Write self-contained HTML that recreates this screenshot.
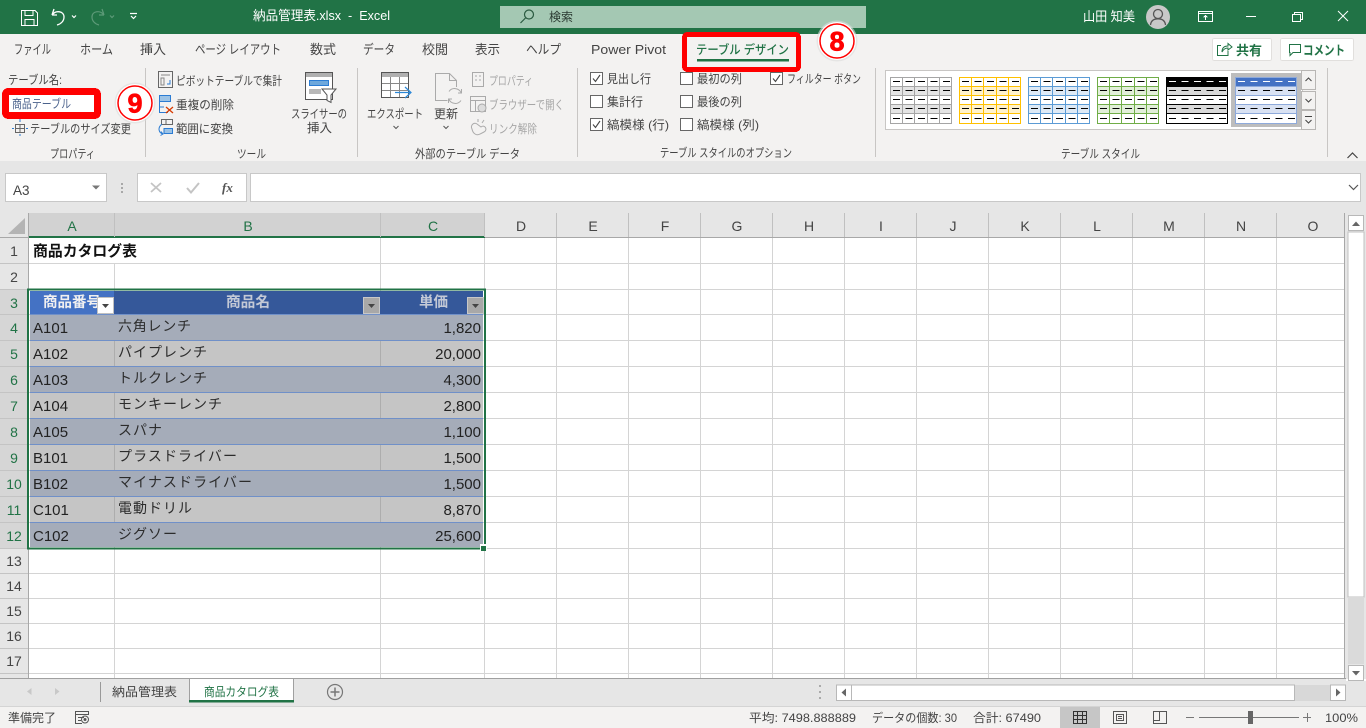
<!DOCTYPE html>
<html lang="ja"><head><meta charset="utf-8"><title>納品管理表.xlsx - Excel</title>
<style>
html,body{margin:0;padding:0;background:#fff;overflow:hidden;width:1366px;height:728px}
svg{display:block}
text{font-family:"Liberation Sans","Noto Sans CJK JP",sans-serif;font-size:12px;fill:#444;white-space:pre}
.w{fill:#fff}.g{fill:#a6a6a6}.gr{fill:#217346}.d{fill:#222}.c{font-size:15px;fill:#222}.k{font-size:14px;fill:#2c2c2c}.h{font-size:14px;fill:#444}.hg{font-size:14px;fill:#217346}
.s{fill:none;stroke:#555;stroke-width:1}.sl{fill:none;stroke:#aaa;stroke-width:1}
.grid{stroke:#d4d4d4;stroke-width:1}
</style></head><body>
<svg width="1366" height="728" viewBox="0 0 1366 728" xmlns="http://www.w3.org/2000/svg" shape-rendering="crispEdges">
<defs>
<symbol id="th" viewBox="0 0 62 47" width="62" height="47">
<rect x="0" y="0" width="62" height="47" fill="#fff"/>
<rect x="0" y="10" width="62" height="9" style="fill:var(--b)"/>
<rect x="0" y="28" width="62" height="9" style="fill:var(--b)"/>
<path d="M.5 .5H61.5V46.5H.5ZM0 9.5H62M0 18.5H62M0 27.5H62M0 36.5H62M12.5 0V47M24.500 0V47M37.5 0V47M49.500 0V47" fill="none" style="stroke:var(--l)"/>
<path d="M3 4.500H62M3 13.500H62M3 22.500H62M3 31.500H62M3 41.500H62" fill="none" stroke="#000" stroke-dasharray="7 5.500"/>
</symbol>
<symbol id="tn" viewBox="0 0 62 47" width="62" height="47">
<rect x="0" y="0" width="62" height="47" fill="#fff"/>
<rect x="0" y="0" width="62" height="9" style="fill:var(--h)"/>
<rect x="0" y="10" width="62" height="9" style="fill:var(--b)"/>
<rect x="0" y="28" width="62" height="9" style="fill:var(--b)"/>
<path d="M.5 .5H61.500V46.500H.5ZM0 9.500H62M0 18.500H62M0 27.500H62M0 36.500H62" fill="none" style="stroke:var(--l)"/>
<path d="M3 4.500H62" fill="none" stroke="#fff" stroke-dasharray="7 5.500"/>
<path d="M3 13.500H62M3 22.500H62M3 31.500H62M3 41.500H62" fill="none" stroke="#000" stroke-dasharray="7 5.500"/>
</symbol>
</defs>

<!-- backgrounds -->
<rect width="1366" height="728" fill="#fff"/>
<rect width="1366" height="34" fill="#217346"/>
<rect y="34" width="1366" height="128" fill="#f3f2f1"/>
<rect y="161" width="1366" height="52" fill="#e6e6e6"/>

<!-- title bar -->
<g fill="none" stroke="#fff" stroke-width="1.200">
<path d="M21.500 10.500H35L37.500 13V25.500H21.500Z"/><path d="M25 10.500V15.500H33V10.500M25 25.500V19.500H34V25.500"/>
<path d="M52 15L54 9M52 15H57M52.500 14.500C56 10 64 11 64 17C64 21 61 24 57 25" shape-rendering="auto" stroke-width="1.300"/>
<path d="M72 15.500L74 17.500L76 15.500" shape-rendering="auto"/>
<g stroke="#5d9a78"><path d="M104 15L102 9M104 15H99M103.500 14.500C100 10 92 11 92 17C92 21 95 24 99 25" shape-rendering="auto"/><path d="M110 15.500L112 17.500L114 15.500" shape-rendering="auto"/></g>
<path d="M130 13.500H137M131 16L133.500 18.500L136 16" shape-rendering="auto"/>
</g>
<text class="w" x="253" y="20" style="font-size:13px" textLength="137" lengthAdjust="spacingAndGlyphs">納品管理表.xlsx  -  Excel</text>
<rect x="500" y="6" width="366" height="22" fill="#a4c8b3"/>
<g fill="none" stroke="#2a5a40" stroke-width="1.200" shape-rendering="auto"><circle cx="529" cy="14.500" r="4.500"/><path d="M525.500 18L520.500 23"/></g>
<text x="549" y="21" style="font-size:12px;fill:#2b3a32" textLength="24" lengthAdjust="spacingAndGlyphs">検索</text>
<text class="w" x="1083" y="21" style="font-size:13px" textLength="52" lengthAdjust="spacingAndGlyphs">山田 知美</text>
<g shape-rendering="auto"><circle cx="1158" cy="17" r="12" fill="#c8c8c8"/><circle cx="1158" cy="14" r="4.500" fill="none" stroke="#555" stroke-width="1.300"/><path d="M1150.500 25C1151 20.500 1154 18.800 1158 18.800S1165 20.500 1165.500 25" fill="none" stroke="#555" stroke-width="1.300"/></g>
<g fill="none" stroke="#fff" stroke-width="1">
<path d="M1198.500 11.500H1212.500V21.500H1198.500ZM1198.500 13.500H1212.500M1205.500 20V15.500M1203.500 17.500L1205.500 15.500L1207.500 17.500"/>
<path d="M1246 16.500H1256"/>
<path d="M1292.500 14.500H1300.500V21.500H1292.500ZM1294.500 14.500V12.500H1302.500V19.500H1300.500"/>
<path d="M1338 11L1348 21M1348 11L1338 21" shape-rendering="auto"/>
</g>

<!-- tabs -->
<g>
<text x="14" y="54" style="font-size:13px" textLength="37" lengthAdjust="spacingAndGlyphs">ファイル</text>
<text x="80" y="54" style="font-size:13px" textLength="33" lengthAdjust="spacingAndGlyphs">ホーム</text>
<text x="140" y="54" style="font-size:13px" textLength="26" lengthAdjust="spacingAndGlyphs">挿入</text>
<text x="195" y="54" style="font-size:13px" textLength="86" lengthAdjust="spacingAndGlyphs">ページ レイアウト</text>
<text x="310" y="54" style="font-size:13px" textLength="26" lengthAdjust="spacingAndGlyphs">数式</text>
<text x="363" y="54" style="font-size:13px" textLength="32" lengthAdjust="spacingAndGlyphs">データ</text>
<text x="422" y="54" style="font-size:13px" textLength="26" lengthAdjust="spacingAndGlyphs">校閲</text>
<text x="475" y="54" style="font-size:13px" textLength="25" lengthAdjust="spacingAndGlyphs">表示</text>
<text x="526" y="54" style="font-size:13px" textLength="35" lengthAdjust="spacingAndGlyphs">ヘルプ</text>
<text x="591" y="54" style="font-size:13px" textLength="75" lengthAdjust="spacingAndGlyphs">Power Pivot</text>
<text x="696" y="54" style="font-size:12.500px;fill:#217346;font-weight:500" textLength="93" lengthAdjust="spacingAndGlyphs">テーブル デザイン</text>
</g>
<rect x="697" y="59" width="92" height="2.500" fill="#217346"/>
<rect x="684.500" y="34.500" width="114" height="35" rx="3" fill="none" stroke="#f00" stroke-width="5"/>

<!-- circle 8 -->
<g shape-rendering="auto"><circle cx="837" cy="41" r="20.500" fill="#dcdcdc" opacity=".6"/><circle cx="837" cy="41" r="19" fill="#fff"/><circle cx="837" cy="41" r="17" fill="#fff" stroke="#f00" stroke-width="1.500"/></g>
<text x="837" y="50.500" text-anchor="middle" shape-rendering="auto" style="font-size:27px;font-weight:700;fill:#f00;stroke:#f00;stroke-width:.7px">8</text>

<!-- ribbon seps -->
<g stroke="#c8c6c4"><path d="M145.500 68V157M357.500 68V157M577.500 68V157M875.500 68V157M1327.500 68V157"/></g>

<!-- properties group -->
<text x="8" y="84" textLength="54" lengthAdjust="spacingAndGlyphs">テーブル名:</text>
<rect x="5.500" y="91.500" width="92" height="24" rx="3" fill="#fff" stroke="#f00" stroke-width="7"/>
<rect x="9" y="95" width="85" height="17" fill="#fff"/>
<text x="12" y="108" style="fill:#4b628c" textLength="59" lengthAdjust="spacingAndGlyphs">商品テーブル</text>
<g shape-rendering="auto"><circle cx="135" cy="103" r="20.500" fill="#dcdcdc" opacity=".6"/><circle cx="135" cy="103" r="19" fill="#fff"/><circle cx="135" cy="103" r="17" fill="#fff" stroke="#f00" stroke-width="1.500"/></g>
<text x="135" y="112.500" text-anchor="middle" style="font-size:27px;font-weight:700;fill:#f00;stroke:#f00;stroke-width:.7px">9</text>
<g fill="none"><path d="M15.500 124.500H24.500V132.500H15.500ZM15.500 128.500H24.500M20 124.500V132.500" stroke="#666"/><path d="M12 128.500H14M26 128.500H28M20 119V122M20 134V136" stroke="#2b7cd3"/></g>
<text x="30" y="133" textLength="101" lengthAdjust="spacingAndGlyphs">テーブルのサイズ変更</text>
<text x="50" y="158" textLength="45" lengthAdjust="spacingAndGlyphs">プロパティ</text>

<!-- tools group -->
<g fill="none">
<path d="M158.500 71.500H172.500V87.500H158.500Z" stroke="#666"/><path d="M161 75H170M161 78V85H164V78Z" stroke="#888"/><path d="M167 84H170V80" stroke="#2b7cd3"/>
<rect x="159.500" y="95.500" width="11" height="6" fill="#9cc3e6" stroke="#2b7cd3"/><path d="M159.500 101.500V112.500H168M159.500 107H164" stroke="#2b7cd3"/>
<path d="M166 107L173 113M173 107L166 113" stroke="#d83b01" stroke-width="1.300" shape-rendering="auto"/>
<path d="M161.500 119.500H172.500V124.500H161.500ZM166 119.500V124.500" stroke="#666"/><path d="M164 128.500H172.500V133.500H164Z" stroke="#2b7cd3" fill="#9cc3e6"/><path d="M162 124C157 128 159 133 163 134M161 131.500L163 134L160.500 135.500" stroke="#2b7cd3" shape-rendering="auto"/>
</g>
<text x="176" y="85" textLength="106" lengthAdjust="spacingAndGlyphs">ピボットテーブルで集計</text>
<text x="176" y="109" textLength="58" lengthAdjust="spacingAndGlyphs">重複の削除</text>
<text x="176" y="133" textLength="57" lengthAdjust="spacingAndGlyphs">範囲に変換</text>
<g>
<rect x="305.500" y="72.500" width="27" height="27" fill="#fff" stroke="#555"/><rect x="306" y="73" width="26" height="4" fill="#b0b0b0"/>
<rect x="309.500" y="80.500" width="19" height="5" fill="#6ea8dc" stroke="#2b7cd3"/><rect x="309" y="89" width="12" height="5" fill="#b8b8b8"/>
<path d="M322 89H336L331 95V102.500L327 100.500V95Z" fill="#fff" stroke="#555" shape-rendering="auto"/>
</g>
<text x="291" y="118" textLength="56" lengthAdjust="spacingAndGlyphs">スライサーの</text>
<text x="307" y="132" textLength="25" lengthAdjust="spacingAndGlyphs">挿入</text>
<text x="237" y="158" textLength="29" lengthAdjust="spacingAndGlyphs">ツール</text>

<!-- external data -->
<rect x="381.500" y="72.500" width="27" height="25" fill="#fff" stroke="#555"/>
<rect x="382" y="73" width="26" height="4" fill="#b0b0b0"/>
<path d="M390.500 77V97M399.500 77V97M382 83.500H408M382 90.500H408" stroke="#888" fill="none"/>
<path d="M395 92.500H410M405 87L411 92.500L405 98" stroke="#2b88d8" fill="none" stroke-width="1.200" shape-rendering="auto"/>
<text x="367" y="118" textLength="56" lengthAdjust="spacingAndGlyphs">エクスポート</text>
<path d="M393.500 126L396 128.500L398.500 126" class="s" shape-rendering="auto"/>
<path d="M447.500 100.500H435.500V73.500H449.500L456.500 80.500V87M449.500 73.500V80.500H456.500" class="sl" shape-rendering="auto"/>
<path d="M449 91.500A7 7 0 0 1 461 92.500M461 100.500A7 7 0 0 1 449 99.500M461.500 89V93H458M448.500 103V99H452" class="sl" shape-rendering="auto"/>
<text x="434" y="118" textLength="24" lengthAdjust="spacingAndGlyphs">更新</text>
<path d="M443.500 126L446 128.500L448.500 126" class="s" shape-rendering="auto"/>
<path d="M472.500 72.500H483.500V86.500H472.500ZM475 76H477M479 76H481M475 80H477M479 80H481" class="sl"/>
<text class="g" x="489" y="85" textLength="44" lengthAdjust="spacingAndGlyphs">プロパティ</text>
<path d="M470.500 96.500H485.500V111.500H470.500ZM470.500 100.500H485.500M475.500 100.500V111.500" class="sl"/><circle cx="482" cy="108" r="4" fill="#ddd" stroke="#aaa" shape-rendering="auto"/>
<text class="g" x="489" y="109" textLength="75" lengthAdjust="spacingAndGlyphs">ブラウザーで開く</text>
<path d="M472 129C470 125 474 122 477 124L481 127C485 124 488 130 484 132L480 134C477 136 473 134 472 129ZM478 119V122M484 120L482 123" class="sl" shape-rendering="auto"/>
<text class="g" x="489" y="133" textLength="48" lengthAdjust="spacingAndGlyphs">リンク解除</text>
<text x="415" y="158" textLength="105" lengthAdjust="spacingAndGlyphs">外部のテーブル データ</text>

<!-- style options -->
<g fill="#fff" stroke="#666">
<rect x="590.500" y="72.500" width="12" height="12"/><rect x="590.500" y="95.500" width="12" height="12"/><rect x="590.500" y="118.500" width="12" height="12"/>
<rect x="680.500" y="72.500" width="12" height="12"/><rect x="680.500" y="95.500" width="12" height="12"/><rect x="680.500" y="118.500" width="12" height="12"/>
<rect x="770.500" y="72.500" width="12" height="12"/>
</g>
<g fill="none" stroke="#444" stroke-width="1.100" shape-rendering="auto">
<path d="M593 78.500L595.500 81.500L600 75"/><path d="M593 124.500L595.500 127.500L600 121"/><path d="M773 78.500L775.500 81.500L780 75"/>
</g>
<text x="607" y="83" textLength="44" lengthAdjust="spacingAndGlyphs">見出し行</text>
<text x="607" y="106" textLength="36" lengthAdjust="spacingAndGlyphs">集計行</text>
<text x="607" y="129" textLength="62" lengthAdjust="spacingAndGlyphs">縞模様 (行)</text>
<text x="697" y="83" textLength="45" lengthAdjust="spacingAndGlyphs">最初の列</text>
<text x="697" y="106" textLength="45" lengthAdjust="spacingAndGlyphs">最後の列</text>
<text x="697" y="129" textLength="62" lengthAdjust="spacingAndGlyphs">縞模様 (列)</text>
<text x="787" y="83" textLength="74" lengthAdjust="spacingAndGlyphs">フィルター ボタン</text>
<text x="660" y="157" textLength="132" lengthAdjust="spacingAndGlyphs">テーブル スタイルのオプション</text>

<!-- gallery -->
<rect x="885.500" y="70.500" width="417" height="59" fill="#fff" stroke="#c8c6c4"/>
<rect x="1231" y="73" width="70" height="54" fill="#bdbdbd"/>
<use href="#th" x="890" y="77" style="--b:#e4e4e4;--l:#a5a5a5"/>
<use href="#th" x="959" y="77" style="--b:#fff2cc;--l:#ffc000"/>
<use href="#th" x="1028" y="77" style="--b:#deeaf6;--l:#5b9bd5"/>
<use href="#th" x="1097" y="77" style="--b:#e2efd9;--l:#70ad47"/>
<use href="#tn" x="1166" y="77" style="--b:#d9d9d9;--l:#000;--h:#000"/>
<use href="#tn" x="1235" y="77" style="--b:#d9e2f3;--l:#8eaadb;--h:#4472c4"/>
<g fill="#f3f2f1" stroke="#b8b6b4"><rect x="1301.500" y="70.500" width="14" height="19"/><rect x="1301.500" y="91.500" width="14" height="18"/><rect x="1301.500" y="110.500" width="14" height="19"/></g>
<g fill="none" stroke="#444" shape-rendering="auto"><path d="M1305.500 81L1308.500 78L1311.500 81"/><path d="M1305.500 99L1308.500 102L1311.500 99"/><path d="M1305 116.500H1312M1305.500 120L1308.500 123L1311.500 120"/></g>
<text x="1061" y="158" textLength="79" lengthAdjust="spacingAndGlyphs">テーブル スタイル</text>
<path d="M1347.500 158L1352.500 153L1357.500 158" fill="none" stroke="#444" stroke-width="1.200" shape-rendering="auto"/>

<!-- share/comment -->
<rect x="1212.500" y="38.500" width="59" height="22" rx="2" fill="#fff" stroke="#e1dfdd"/>
<rect x="1280.500" y="38.500" width="73" height="22" rx="2" fill="#fff" stroke="#e1dfdd"/>
<path d="M1221 45.500H1217.500V55.500H1228V51M1222 52C1222 47 1225 46 1228 46V43.500L1232 47L1228 50V48C1226 48 1223.500 49 1222 52Z" fill="none" stroke="#217346" shape-rendering="auto"/>
<text x="1236" y="55" style="font-size:13px;font-weight:700;fill:#217346" textLength="26" lengthAdjust="spacingAndGlyphs">共有</text>
<path d="M1289.500 44.500H1300.500V52.500H1293L1290 55.500V52.500H1289.500Z" fill="none" stroke="#217346" shape-rendering="auto"/>
<text x="1303" y="55" style="font-size:13px;font-weight:700;fill:#217346" textLength="42" lengthAdjust="spacingAndGlyphs">コメント</text>

<!-- formula bar -->
<rect x="5.500" y="173.500" width="101" height="28" fill="#fff" stroke="#c8c8c8"/>
<text x="13" y="195" style="font-size:13.500px;fill:#444">A3</text>
<path d="M92 185.500H100L96 189.500Z" fill="#777" shape-rendering="auto"/>
<g fill="#a8a8a8"><rect x="121" y="183" width="2" height="2"/><rect x="121" y="187" width="2" height="2"/><rect x="121" y="191" width="2" height="2"/></g>
<rect x="137.500" y="173.500" width="109" height="28" fill="#fff" stroke="#c8c8c8"/>
<rect x="250.500" y="173.500" width="1110" height="28" fill="#fff" stroke="#c8c8c8"/>
<path d="M151 183L161 192M161 183L151 192" stroke="#c4c4c4" stroke-width="1.800" fill="none" shape-rendering="auto"/>
<path d="M187 188L191 192.500L199 183" stroke="#c4c4c4" stroke-width="2" fill="none" shape-rendering="auto"/>
<text x="222" y="192" style="font-family:'Liberation Serif',serif;font-size:13px;font-style:italic;font-weight:700;fill:#555">fx</text>
<path d="M1349 185L1353.500 189.500L1358 185" fill="none" stroke="#555" stroke-width="1.200" shape-rendering="auto"/>

<!-- headers -->
<rect y="213" width="1346" height="25" fill="#e6e6e6"/>
<rect x="0" y="238" width="28" height="440" fill="#e6e6e6"/>
<path d="M25 218V234H8Z" fill="#b4b4b4" shape-rendering="auto"/>
<rect x="29" y="213" width="456" height="24" fill="#d2d2d2"/>
<rect x="0" y="290" width="28" height="259" fill="#d6d6d6"/>
<path d="M28.500 213V678M0 237.500H1346" stroke="#a8a8a8"/>
<rect x="29" y="236" width="456" height="2" fill="#217346"/>
<path d="M114.500 213V237M380.500 213V237M484.500 213V237M556.500 213V237M628.500 213V237M700.500 213V237M772.500 213V237M844.500 213V237M916.500 213V237M988.500 213V237M1060.500 213V237M1132.500 213V237M1204.500 213V237M1276.500 213V237" stroke="#c0c0c0"/>
<path d="M1344.500 213V678" stroke="#a8a8a8"/>
<g text-anchor="middle">
<text class="hg" x="72" y="231">A</text><text class="hg" x="248" y="231">B</text><text class="hg" x="433" y="231">C</text>
<text class="h" x="521" y="231">D</text><text class="h" x="593" y="231">E</text><text class="h" x="665" y="231">F</text><text class="h" x="737" y="231">G</text><text class="h" x="809" y="231">H</text><text class="h" x="881" y="231">I</text><text class="h" x="953" y="231">J</text><text class="h" x="1025" y="231">K</text><text class="h" x="1097" y="231">L</text><text class="h" x="1169" y="231">M</text><text class="h" x="1241" y="231">N</text><text class="h" x="1313" y="231">O</text>
<text class="h" x="14" y="256">1</text><text class="h" x="14" y="282">2</text>
<text class="hg" x="14" y="308">3</text><text class="hg" x="14" y="333">4</text><text class="hg" x="14" y="359">5</text><text class="hg" x="14" y="385">6</text><text class="hg" x="14" y="411">7</text><text class="hg" x="14" y="437">8</text><text class="hg" x="14" y="463">9</text><text class="hg" x="14" y="489">10</text><text class="hg" x="14" y="515">11</text><text class="hg" x="14" y="541">12</text>
<text class="h" x="14" y="566">13</text><text class="h" x="14" y="591">14</text><text class="h" x="14" y="616">15</text><text class="h" x="14" y="641">16</text><text class="h" x="14" y="666">17</text>
</g>

<!-- gridlines -->
<g class="grid">
<path d="M29 263.500H1344M29 289.500H1344M29 314.500H1344M29 340.500H1344M29 366.500H1344M29 392.500H1344M29 418.500H1344M29 444.500H1344M29 470.500H1344M29 496.500H1344M29 522.500H1344M29 548.500H1344M29 573.500H1344M29 598.500H1344M29 623.500H1344M29 648.500H1344M29 673.500H1344"/>
<path d="M114.500 264V678M380.500 238V678M484.500 238V678M556.500 238V678M628.500 238V678M700.500 238V678M772.500 238V678M844.500 238V678M916.500 238V678M988.500 238V678M1060.500 238V678M1132.500 238V678M1204.500 238V678M1276.500 238V678"/>
</g>
<path d="M0 263.500H28M0 289.500H28M0 314.500H28M0 340.500H28M0 366.500H28M0 392.500H28M0 418.500H28M0 444.500H28M0 470.500H28M0 496.500H28M0 522.500H28M0 548.500H28M0 573.500H28M0 598.500H28M0 623.500H28M0 648.500H28M0 673.500H28" stroke="#c4c4c4"/>

<text x="33" y="256" style="font-size:15px;font-weight:700;fill:#111" textLength="104" lengthAdjust="spacingAndGlyphs">商品カタログ表</text>

<!-- table -->
<rect x="30" y="291" width="453" height="24" fill="#35589a"/>
<rect x="30" y="291" width="84" height="24" fill="#4472c4"/>
<rect x="30" y="315" width="453" height="26" fill="#a5acb9"/>
<rect x="30" y="341" width="453" height="26" fill="#c5c5c5"/>
<rect x="30" y="367" width="453" height="26" fill="#a5acb9"/>
<rect x="30" y="393" width="453" height="26" fill="#c5c5c5"/>
<rect x="30" y="419" width="453" height="26" fill="#a5acb9"/>
<rect x="30" y="445" width="453" height="26" fill="#c5c5c5"/>
<rect x="30" y="471" width="453" height="26" fill="#a5acb9"/>
<rect x="30" y="497" width="453" height="26" fill="#c5c5c5"/>
<rect x="30" y="523" width="453" height="24" fill="#a5acb9"/>
<path d="M114.500 341V367M380.500 341V367M114.500 393V419M380.500 393V419M114.500 445V471M380.500 445V471M114.500 497V523M380.500 497V523" stroke="#adadad"/>
<path d="M30 314.500H483M30 340.500H483M30 366.500H483M30 392.500H483M30 418.500H483M30 444.500H483M30 470.500H483M30 496.500H483M30 522.500H483" stroke="#7090c8"/>
<text x="43" y="307" style="font-size:14.500px;font-weight:700;fill:#f0f0f0" textLength="58" lengthAdjust="spacingAndGlyphs">商品番号</text>
<text x="226" y="307" style="font-size:14.500px;font-weight:700;fill:#c3c9d6" textLength="44" lengthAdjust="spacingAndGlyphs">商品名</text>
<text x="419" y="307" style="font-size:14.500px;font-weight:700;fill:#c3c9d6" textLength="29" lengthAdjust="spacingAndGlyphs">単価</text>
<rect x="97.500" y="297.500" width="16" height="16" fill="#fff" stroke="#c0c0c0"/>
<rect x="363.500" y="297.500" width="16" height="16" fill="#a8a8a8" stroke="#c8c8c8"/>
<rect x="467.500" y="297.500" width="16" height="16" fill="#a8a8a8" stroke="#c8c8c8"/>
<g fill="#444" shape-rendering="auto"><path d="M102 304H109L105.500 308Z"/><path d="M368 304H375L371.500 308Z"/><path d="M472 304H479L475.500 308Z"/></g>

<g>
<text class="c" x="33" y="333">A101</text><text class="k" x="118" y="331" textLength="73" lengthAdjust="spacing">六角レンチ</text><text class="c" x="481" y="333" text-anchor="end">1,820</text>
<text class="c" x="33" y="359">A102</text><text class="k" x="118" y="357" textLength="89" lengthAdjust="spacing">パイプレンチ</text><text class="c" x="481" y="359" text-anchor="end">20,000</text>
<text class="c" x="33" y="385">A103</text><text class="k" x="118" y="383" textLength="89" lengthAdjust="spacing">トルクレンチ</text><text class="c" x="481" y="385" text-anchor="end">4,300</text>
<text class="c" x="33" y="411">A104</text><text class="k" x="118" y="409" textLength="104" lengthAdjust="spacing">モンキーレンチ</text><text class="c" x="481" y="411" text-anchor="end">2,800</text>
<text class="c" x="33" y="437">A105</text><text class="k" x="118" y="435" textLength="44" lengthAdjust="spacing">スパナ</text><text class="c" x="481" y="437" text-anchor="end">1,100</text>
<text class="c" x="33" y="463">B101</text><text class="k" x="118" y="461" textLength="119" lengthAdjust="spacing">プラスドライバー</text><text class="c" x="481" y="463" text-anchor="end">1,500</text>
<text class="c" x="33" y="489">B102</text><text class="k" x="118" y="487" textLength="134" lengthAdjust="spacing">マイナスドライバー</text><text class="c" x="481" y="489" text-anchor="end">1,500</text>
<text class="c" x="33" y="515">C101</text><text class="k" x="118" y="513" textLength="74" lengthAdjust="spacing">電動ドリル</text><text class="c" x="481" y="515" text-anchor="end">8,870</text>
<text class="c" x="33" y="541">C102</text><text class="k" x="118" y="539" textLength="59" lengthAdjust="spacing">ジグソー</text><text class="c" x="481" y="541" text-anchor="end">25,600</text>
</g>

<!-- selection -->
<rect x="28" y="289.500" width="457" height="259" fill="none" stroke="#217346" stroke-width="2"/>
<rect x="480" y="544" width="7" height="7" fill="#fff"/>
<rect x="481" y="546" width="5" height="5" fill="#217346"/>

<!-- v scrollbar -->
<rect x="1345" y="213" width="21" height="466" fill="#e6e6e6"/>
<rect x="1348" y="232" width="16" height="365" fill="#fff" stroke="#c0c0c0"/>
<rect x="1348" y="597" width="16" height="67" fill="#dadada"/>
<rect x="1348.500" y="215.500" width="15" height="15" fill="#fff" stroke="#b8b8b8"/>
<rect x="1348.500" y="665.500" width="15" height="15" fill="#fff" stroke="#b8b8b8"/>
<path d="M1352 226H1360L1356 221.500Z" fill="#666" shape-rendering="auto"/>
<path d="M1352 671H1360L1356 675.500Z" fill="#666" shape-rendering="auto"/>

<!-- sheet tabs -->
<rect y="678" width="1346" height="28" fill="#e6e6e6"/>
<rect x="1345" y="681" width="21" height="25" fill="#e6e6e6"/>
<path d="M0 678.500H1346" stroke="#a0a0a0"/>
<path d="M31.500 688L27 691.500L31.500 695ZM55 688L59.500 691.500L55 695Z" fill="#c8c8c8" shape-rendering="auto"/>
<path d="M100.500 682V702" stroke="#999"/>
<text x="112" y="696" textLength="65" lengthAdjust="spacingAndGlyphs">納品管理表</text>
<path d="M189.500 702V678.500H293.500V702" fill="#fff" stroke="#a0a0a0"/>
<rect x="189" y="700" width="105" height="2.500" fill="#217346"/>
<text class="gr" x="204" y="696" textLength="75" lengthAdjust="spacingAndGlyphs">商品カタログ表</text>
<g shape-rendering="auto" fill="none" stroke="#777"><circle cx="335" cy="692" r="7.500" stroke-width="1.200"/><path d="M335 687.500V696.500M330.500 692H339.500" stroke-width="1.500"/></g>
<g fill="#aaa"><rect x="819" y="685" width="2" height="2"/><rect x="819" y="691" width="2" height="2"/><rect x="819" y="697" width="2" height="2"/></g>
<rect x="1295" y="685" width="50" height="16" fill="#d8d8d8"/>
<rect x="851.500" y="685" width="443" height="15.500" fill="#fff" stroke="#b8b8b8"/>
<rect x="836.500" y="685" width="15" height="15.500" fill="#fff" stroke="#b8b8b8"/>
<rect x="1330.500" y="685" width="15" height="15.500" fill="#fff" stroke="#b8b8b8"/>
<path d="M846 688.500L841.500 692.500L846 696.500Z" fill="#666" shape-rendering="auto"/>
<path d="M1336 688.500L1340.500 692.500L1336 696.500Z" fill="#666" shape-rendering="auto"/>

<!-- status bar -->
<rect y="706" width="1366" height="22" fill="#f3f2f1"/>
<path d="M0 706.500H1366" stroke="#d4d4d4"/>
<text x="8" y="722" textLength="48" lengthAdjust="spacingAndGlyphs">準備完了</text>
<path d="M75.500 711.500H88.500V714.500H75.500ZM75.500 714.500V723.500H82M78 717.500H84M78 720.500H81" class="s"/><circle cx="85" cy="719.500" r="3.500" fill="none" stroke="#555" shape-rendering="auto"/><circle cx="85" cy="719.500" r="1.500" fill="#555" shape-rendering="auto"/>
<text x="749" y="722" textLength="107" lengthAdjust="spacingAndGlyphs">平均: 7498.888889</text>
<text x="872" y="722" textLength="85" lengthAdjust="spacingAndGlyphs">データの個数: 30</text>
<text x="973" y="722" textLength="68" lengthAdjust="spacingAndGlyphs">合計: 67490</text>
<rect x="1060" y="707" width="40" height="21" fill="#c6c6c6"/>
<path d="M1073.500 711.500H1086.500V723.500H1073.500ZM1073.500 715.500H1086.500M1073.500 719.500H1086.500M1077.500 711.500V723.500M1082.500 711.500V723.500" fill="none" stroke="#333"/>
<path d="M1113.500 711.500H1126.500V723.500H1113.500ZM1116.500 714.500H1123.500V720.500H1116.500ZM1118 716.500H1122M1118 718.500H1122" class="s"/>
<path d="M1153.500 711.500H1166.500V723.500H1153.500ZM1153.500 720.500H1159.500V711.500M1166.500 720.500" class="s"/>
<path d="M1186 717.500H1194M1199 717.500H1299M1303 717.500H1311M1307.500 713V722" stroke="#777" fill="none"/>
<rect x="1248" y="711" width="5" height="13" fill="#666"/>
<text x="1325" y="722" textLength="33" lengthAdjust="spacingAndGlyphs">100%</text>
</svg>
</body></html>
